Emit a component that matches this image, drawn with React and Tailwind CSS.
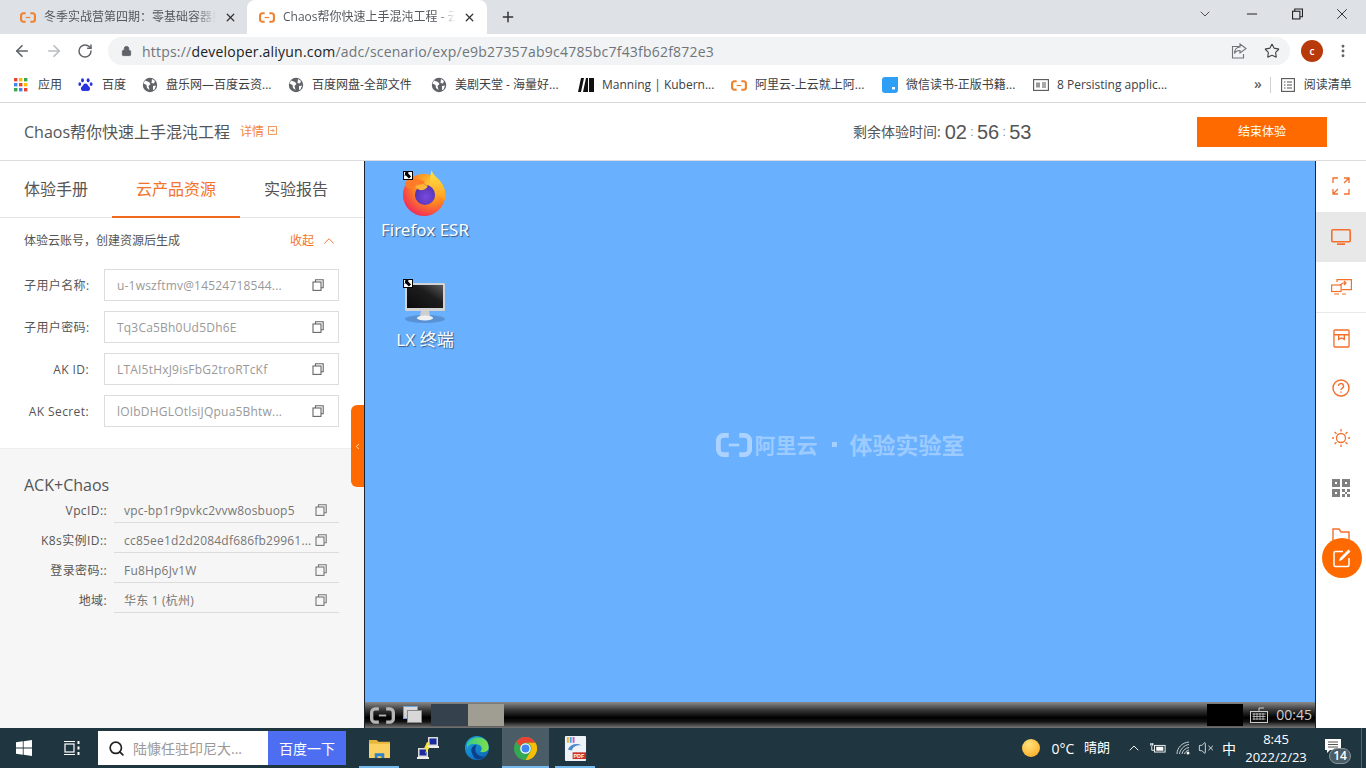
import { ArrowLeft, ArrowRight, RotateCw, Lock, Star, ChevronDown, ChevronUp, ChevronLeft, Minus, X, Plus, MoreVertical, Search, VolumeX } from 'lucide-react';

const SANS = "font-['Open_Sans','Noto_Sans_CJK_SC',sans-serif]";

const AliLogo = ({ className = 'w-[16px] h-[11px]', color = '#f0812d' }) => (
  <svg viewBox="0 0 24 16" className={className} fill="none">
    <path d="M8.5 1.6H5A3.4 3.4 0 0 0 1.6 5v6A3.4 3.4 0 0 0 5 14.4h3.5M15.5 1.6H19A3.4 3.4 0 0 1 22.4 5v6a3.4 3.4 0 0 1-3.4 3.4h-3.5" stroke={color} strokeWidth="3.2" />
    <path d="M8.5 8h7" stroke={color} strokeWidth="1.8" />
  </svg>
);

const CopyIcon = ({ color = '#666' }) => (
  <svg viewBox="0 0 12 12" className="w-[12px] h-[12px]" fill="none" stroke={color} strokeWidth="1.1">
    <rect x="1" y="3" width="8" height="8.4" />
    <path d="M3.5 3V.8h7.7v8H9" />
  </svg>
);

const Globe = () => (
  <svg viewBox="0 0 16 16" className="w-[16px] h-[16px]">
    <circle cx="8" cy="8" r="7.2" fill="#5f6368" />
    <path d="M3 3.5 7 5l1.5 2-2 2 1 4L5 11 4.5 8 1.5 6.5zM10 2l3 2-1 2.5-2.5-.5zM11 9l3-.5-1.5 4-1.5.5z" fill="#fff" />
  </svg>
);

const AppsGrid = () => (
  <svg viewBox="0 0 14 14" className="w-[14px] h-[14px]">
    {[0, 5, 10].map(y => [0, 5, 10].map(x => (
      <rect key={`${x}-${y}`} x={x} y={y} width="3.4" height="3.4" fill={y === 0 ? (x === 0 ? '#ea4335' : x === 5 ? '#fbbc04' : '#34a853') : y === 5 ? (x === 0 ? '#4285f4' : x === 5 ? '#ea4335' : '#fbbc04') : (x === 0 ? '#34a853' : x === 5 ? '#4285f4' : '#ea4335')} />
    )))}
  </svg>
);

const Paw = () => (
  <svg viewBox="0 0 16 16" className="w-[15px] h-[16px]" fill="#2932e1">
    <ellipse cx="4.8" cy="3" rx="1.6" ry="2.3" />
    <ellipse cx="10.8" cy="3" rx="1.6" ry="2.3" />
    <ellipse cx="1.9" cy="7" rx="1.5" ry="2" />
    <ellipse cx="14" cy="7" rx="1.5" ry="2" />
    <path d="M8 6.5c-2 0-2.4 2-4 3.4-1.7 1.6-.8 4.6 1.7 4.6 1 0 1.5-.4 2.3-.4s1.3.4 2.3.4c2.5 0 3.4-3 1.7-4.6C10.4 8.5 10 6.5 8 6.5z" />
  </svg>
);

const Manning = () => (
  <svg viewBox="0 0 16 14" className="w-[16px] h-[14px]" fill="#111">
    <path d="M0 14 3 0h3L3 14zM5 14 8 0h2v14zM11 0h5v14h-5z" />
  </svg>
);

const WeRead = () => (
  <svg viewBox="0 0 16 16" className="w-[16px] h-[16px]">
    <path d="M3 0h13v13a3 3 0 0 1-3 3H3a3 3 0 0 1-3-3V3a3 3 0 0 1 3-3z" fill="#2e9ff5" />
    <rect x="10" y="10" width="3" height="2.4" fill="#fff" />
  </svg>
);

const DocIcon = () => (
  <svg viewBox="0 0 16 12" className="w-[16px] h-[12px]" fill="none" stroke="#555" strokeWidth="1.1">
    <rect x=".6" y=".6" width="14.8" height="10.8" />
    <rect x="3" y="3.5" width="4" height="5" fill="#999" stroke="none" />
    <path d="M9 4h4M9 6h4M9 8h4" />
  </svg>
);

const BOOKMARKS = [
  { icon: <AppsGrid />, text: '应用', w: 'w-[64px]' },
  { icon: <Paw />, text: '百度', w: 'w-[64px]' },
  { icon: <Globe />, text: '盘乐网—百度云资...', w: 'w-[146px]' },
  { icon: <Globe />, text: '百度网盘-全部文件', w: 'w-[143px]' },
  { icon: <Globe />, text: '美剧天堂 - 海量好...', w: 'w-[147px]' },
  { icon: <Manning />, text: 'Manning | Kubern...', w: 'w-[153px]' },
  { icon: <AliLogo />, text: '阿里云-上云就上阿...', w: 'w-[151px]' },
  { icon: <WeRead />, text: '微信读书-正版书籍...', w: 'w-[151px]' },
  { icon: <DocIcon />, text: '8 Persisting applic...', w: 'w-[151px]' },
];

const Field = ({ label, value }) => (
  <div className="flex items-center h-[32px]">
    <span className="w-[65px] pt-[1px] text-right text-[12px] tracking-[0.4px] text-[#555] whitespace-nowrap">{label}</span>
    <div className="ml-[15px] w-[235px] h-[32px] border border-[#dcdcdc] flex items-center justify-between pl-[12px] pr-[14px] bg-white">
      <span className="pt-[1px] text-[12px] text-[#999] tracking-[0.2px] whitespace-nowrap">{value}</span>
      <CopyIcon />
    </div>
  </div>
);

const InfoRow = ({ label, value }) => (
  <div className="flex items-start h-[30px]">
    <span className="w-[107px] pt-[9px] leading-[18px] text-right text-[12px] tracking-[0.4px] text-[#555] whitespace-nowrap">{label}</span>
    <div className="ml-[7px] w-[225px] h-[30px] border-b border-[#dcdcdc] flex items-start justify-between pt-[9px] pl-[10px] pr-[12px]">
      <span className="text-[12px] leading-[18px] text-[#777] tracking-[0.2px] whitespace-nowrap">{value}</span>
      <span className="pt-[2px]"><CopyIcon color="#777" /></span>
    </div>
  </div>
);

const Firefox = () => (
  <svg viewBox="0 0 48 48" className="w-[46px] h-[48px]">
    <defs>
      <radialGradient id="ffBody" cx="0.7" cy="0.25" r="0.95">
        <stop offset="0" stopColor="#ffcf3c" />
        <stop offset="0.45" stopColor="#ff8a1f" />
        <stop offset="0.8" stopColor="#f5394f" />
        <stop offset="1" stopColor="#d81f78" />
      </radialGradient>
      <linearGradient id="ffTop" x1="0" y1="0" x2="0" y2="1">
        <stop offset="0" stopColor="#ffe847" />
        <stop offset="1" stopColor="#ff9a1f" />
      </linearGradient>
      <radialGradient id="ffCore" cx="0.55" cy="0.6" r="0.7">
        <stop offset="0" stopColor="#7a49e0" />
        <stop offset="1" stopColor="#4a2fa8" />
      </radialGradient>
    </defs>
    <circle cx="23" cy="26" r="22" fill="url(#ffBody)" />
    <path d="M31 0c1 5 5 7 9 12 5 6 6 13 5 20L32 22c-3-5-4-12-1-22z" fill="url(#ffTop)" />
    <circle cx="24" cy="26" r="10.5" fill="url(#ffCore)" />
    <path d="M3 14c3-5 6-7 10-8-1 2-1 3 0 4 3-1 7 0 10 2 3 2-5 4-8 3-1 3-5 4-9 4-2-1-3-3-3-5z" fill="#ff7b27" />
    <path d="M14 17c4-2 8-2 12-1 2 1-1 5-6 5-3 0-5-2-6-4z" fill="#ffb43a" />
  </svg>
);

const Monitor = () => (
  <svg viewBox="0 0 44 44" className="w-[44px] h-[44px]">
    <defs>
      <linearGradient id="scr" x1="0" y1="1" x2="1" y2="0">
        <stop offset="0" stopColor="#0b0b0b" />
        <stop offset="0.6" stopColor="#1d1d1d" />
        <stop offset="1" stopColor="#5a5a5a" />
      </linearGradient>
    </defs>
    <ellipse cx="22" cy="38" rx="20" ry="4" fill="#4d7eb8" opacity="0.6" />
    <rect x="2" y="2" width="40" height="28" rx="1" fill="#d3d3d3" />
    <rect x="4" y="4" width="36" height="23" fill="url(#scr)" />
    <path d="M18 30h8l1 5h-10z" fill="#cfcfcf" />
    <ellipse cx="22" cy="37" rx="8" ry="2.5" fill="#f1f1f1" />
  </svg>
);

const ShortcutBadge = () => (
  <div className="w-[10px] h-[9px] bg-white border border-black flex items-center justify-center">
    <svg viewBox="0 0 8 8" className="w-[8px] h-[7px]"><path d="M1 0h4L3.8 1.2 7.5 5 5 7.5 1.3 3.7 0 5z" fill="#000" /></svg>
  </div>
);

const ORG = '#f26f2c';

const Rail = () => (
  <div className="relative w-[50px] bg-white flex flex-col">
    <div className="h-[51px] flex items-center justify-center">
      <svg viewBox="0 0 18 18" className="w-[18px] h-[18px] -translate-y-[1px]" fill="none" stroke={ORG} strokeWidth="1.3">
        <path d="M1 6V1h5M12 1h5v5M17 12v5h-5M6 17H1v-5M12 6l5-5M1 17l5-5" />
      </svg>
    </div>
    <div className="h-[50px] bg-[#e8e8e8] flex items-center justify-center">
      <svg viewBox="0 0 20 16" className="w-[20px] h-[16px]" fill="none" stroke={ORG} strokeWidth="1.6">
        <rect x=".8" y=".8" width="18.4" height="12" rx="1" />
        <path d="M6 15.2h8" strokeWidth="1.8" />
      </svg>
    </div>
    <div className="h-[51px] border-b border-[#e8e8e8] flex items-center justify-center">
      <svg viewBox="0 0 21 16" className="w-[21px] h-[16px]" fill="none" stroke={ORG} strokeWidth="1.2">
        <path d="M6 3V.6h14.4v10H11M15 15h-4" />
        <rect x=".6" y="6" width="9.5" height="6.5" />
        <path d="M3 15h5M9 6l3-2h3M13 2l2 2-2 2" />
      </svg>
    </div>
    <div className="h-[50px] flex items-center justify-center">
      <svg viewBox="0 0 18 20" className="w-[17px] h-[19px]" fill="none" stroke={ORG} strokeWidth="1.4">
        <path d="M2 1h14a1 1 0 0 1 1 1v16a1 1 0 0 1-1 1H2a1 1 0 0 1-1-1V2a1 1 0 0 1 1-1zM1 6h16M6 6v5l3-1.5 3 1.5V6" />
      </svg>
    </div>
    <div className="h-[50px] flex items-center justify-center">
      <svg viewBox="0 0 18 18" className="w-[18px] h-[18px]" fill="none" stroke={ORG} strokeWidth="1.4">
        <circle cx="9" cy="9" r="8" />
        <path d="M6.5 7a2.5 2.5 0 1 1 3.6 2.3c-.8.4-1.100.9-1.100 1.700M9 12.600v1.200" />
      </svg>
    </div>
    <div className="h-[50px] flex items-center justify-center">
      <svg viewBox="0 0 18 18" className="w-[18px] h-[18px]" fill="none" stroke={ORG} strokeWidth="1.3">
        <circle cx="9" cy="9" r="4.5" />
        <path d="M9 0v2.5M9 15.5V18M0 9h2M16 9h2M2.5 3l2 1.700M15.500 3l-2 1.700M2.500 15l2-1.700M15.500 15l-2-1.700" />
      </svg>
    </div>
    <div className="h-[50px] flex items-center justify-center">
      <svg viewBox="0 0 18 18" className="w-[18px] h-[18px]">
        <path fillRule="evenodd" d="M0 0h8v8H0zM3 3v2h2V3zM10 0h8v8h-8zM13 3v2h2V3zM0 10h8v8H0zM3 13v2h2v-2zM10 10h3v3h-3zM15 10h3v3h-3zM13 13h2v2h-2zM10 15h3v3h-3zM15 15h3v3h-3z" fill="#808080" />
      </svg>
    </div>
    <div className="h-[50px] flex items-center justify-center">
      <svg viewBox="0 0 18 18" className="w-[18px] h-[18px] -translate-y-[2px]" fill="none" stroke={ORG} strokeWidth="1.4">
        <path d="M1 17V2h6l2 3h8v12z" />
      </svg>
    </div>
    {/* floating note button */}
    <div className="absolute left-[6px] top-[377px] w-[40px] h-[40px] rounded-full bg-[#ff6a00] flex items-center justify-center">
      <svg viewBox="0 0 20 20" className="w-[20px] h-[20px]" fill="none" stroke="#fff" strokeWidth="1.5">
        <path d="M17 10v7a1.5 1.5 0 0 1-1.5 1.5h-12A1.5 1.5 0 0 1 2 17V5a1.5 1.5 0 0 1 1.5-1.5H11" />
        <path d="M16.5 1.5l2 2L10 12l-3 1 1-3z" fill="#fff" stroke="none" />
      </svg>
    </div>
  </div>
);

const WinLogo = () => (
  <svg viewBox="0 0 16 16" className="w-[16px] h-[16px]" fill="#fff">
    <path d="M0 2.3 6.8 1.3v6.3H0zM7.6 1.2 16 0v7.6H7.6zM0 8.4h6.8v6.3L0 13.7zM7.6 8.4H16V16l-8.4-1.2z" />
  </svg>
);

const TaskView = () => (
  <svg viewBox="0 0 16 16" className="w-[16px] h-[16px]" fill="none" stroke="#fff" strokeWidth="1.2">
    <path d="M0 1.5h11M0 14.5h11" />
    <rect x="1" y="4" width="9" height="8" />
    <path d="M14.5 1v3M14.5 6.5v3M14.5 12v3" strokeWidth="2" />
  </svg>
);

const Explorer = () => (
  <svg viewBox="0 0 24 22" className="w-[23px] h-[21px]">
    <path d="M1 2h8l2 2h12v6H1z" fill="#e8b53c" />
    <rect x="1" y="6" width="22" height="15" fill="#fbd261" />
    <path d="M7 21v-5h10v5h-3v-2h-4v2z" fill="#2e83c9" />
  </svg>
);

const NetIcon = () => (
  <svg viewBox="0 0 24 24" className="w-[24px] h-[24px]">
    <rect x="12" y="1" width="10" height="9" fill="#dcdcdc" />
    <rect x="13.5" y="2.5" width="7" height="6" fill="#1b2a9c" />
    <rect x="2" y="12" width="10" height="9" fill="#dcdcdc" />
    <rect x="3.5" y="13.5" width="7" height="6" fill="#1b2a9c" />
    <rect x="1" y="21" width="12" height="2" fill="#eee" />
    <rect x="11" y="10" width="12" height="2" fill="#eee" />
    <path d="M11 6l3 1-3 4 3 0-5 7 1.5-5.5H8z" fill="#f6e53a" />
  </svg>
);

const Edge = () => (
  <svg viewBox="0 0 24 24" className="w-[24px] h-[24px]">
    <defs>
      <linearGradient id="edg" x1="0" y1="0" x2="1" y2="1">
        <stop offset="0" stopColor="#1aa7e0" />
        <stop offset="1" stopColor="#0b5fb5" />
      </linearGradient>
      <linearGradient id="edg2" x1="0" y1="0" x2="1" y2="0">
        <stop offset="0" stopColor="#37c98a" />
        <stop offset="1" stopColor="#7fe04a" />
      </linearGradient>
    </defs>
    <circle cx="12" cy="12" r="12" fill="url(#edg)" />
    <path d="M2 8c3-6 11-8 17-5 4 2 5 7 4.5 10-.5 3-6 4-8.5 2.500 3-2 2-6-2-7C8 7.500 3 8 2 13z" fill="url(#edg2)" />
    <path d="M7 17c-2-3 0-8 5-8-3 3-2 9 3 11 2 1 4 .5 5-.5-2 3-6 4.500-9 3.500-2-1-3-3-4-6z" fill="#0c3f8f" />
  </svg>
);

const Chrome = () => (
  <svg viewBox="0 0 24 24" className="w-[23px] h-[23px]">
    <circle cx="12" cy="12" r="12" fill="#34a853" />
    <path d="M12 0a12 12 0 0 1 10.4 6H12a6 6 0 0 0-5.6 3.8L2.3 5A12 12 0 0 1 12 0z" fill="#ea4335" />
    <path d="M22.4 6A12 12 0 0 1 12 24l5.200-9A6 6 0 0 0 17.200 8.500 6 6 0 0 0 12 6z" fill="#fbbc04" />
    <circle cx="12" cy="12" r="5.5" fill="#fff" />
    <circle cx="12" cy="12" r="4.2" fill="#4285f4" />
  </svg>
);

const PdfApp = () => (
  <svg viewBox="0 0 24 26" className="w-[23px] h-[25px]">
    <rect x="1" y="0" width="22" height="26" rx="1" fill="#eef3f8" />
    <rect x="3" y="1" width="2" height="6" fill="#e8b53c" />
    <rect x="6" y="1" width="2" height="6" fill="#47a5dc" />
    <rect x="9" y="1" width="2" height="6" fill="#c45cc5" />
    <path d="M4 14c3-6 10-7 15-4-5-1-9 0-11 5z" fill="#4d88c9" />
    <rect x="9" y="17" width="14" height="7" fill="#c8302a" />
    <text x="10" y="23" fontSize="5.5" fontWeight="700" fill="#fff" fontFamily="Liberation Sans, sans-serif">PDF</text>
  </svg>
);

const Taskbar = () => (
  <div className={`h-[40px] bg-[#1f3540] flex items-center text-white ${SANS}`}>
    <div className="w-[48px] h-full flex items-center justify-center"><WinLogo /></div>
    <div className="w-[48px] h-full flex items-center justify-center"><TaskView /></div>
    <div className="ml-[2px] w-[170px] h-[34px] bg-white flex items-center pl-[10px]">
      <Search className="w-[17px] h-[17px] text-[#222]" strokeWidth={2.4} />
      <span className="ml-[8px] text-[14px] text-[#999] whitespace-nowrap">陆慷任驻印尼大...</span>
    </div>
    <div className="w-[78px] h-[34px] bg-[#4e6ef2] flex items-center justify-center text-[14px]">百度一下</div>
    <div className="ml-[9px] flex h-full">
      <div className="relative w-[48px] h-full flex items-center justify-center"><Explorer /><div className="absolute bottom-0 left-[4px] right-[4px] h-[2px] bg-[#76b9ed]" /></div>
      <div className="ml-[1px] w-[48px] h-full flex items-center justify-center"><NetIcon /></div>
      <div className="ml-[1px] w-[48px] h-full flex items-center justify-center"><Edge /></div>
      <div className="relative ml-[1px] w-[47px] h-full bg-[#4a5c66] flex items-center justify-center"><Chrome /><div className="absolute bottom-0 left-0 right-0 h-[2px] bg-[#76b9ed]" /></div>
      <div className="relative ml-[2px] w-[48px] h-full flex items-center justify-center"><PdfApp /><div className="absolute bottom-0 left-[4px] right-[4px] h-[2px] bg-[#76b9ed]" /></div>
    </div>
    <div className="ml-auto flex items-center h-full text-[13px]">
      <div className="w-[18px] h-[18px] rounded-full bg-[radial-gradient(circle_at_40%_30%,#ffe27a,#f9a51a)] mr-[6px]" />
      <div className="w-[34px] text-center text-[14px] whitespace-nowrap">0°C</div>
      <div className="w-[34px] text-center text-[13px] whitespace-nowrap">晴朗</div>
      <div className="w-[8px]" />
      <div className="w-[24px] flex justify-center"><ChevronUp className="w-[16px] h-[16px]" strokeWidth={1.4} /></div>
      <div className="w-[24px] flex justify-center">
        <svg viewBox="0 0 18 12" className="w-[16px] h-[11px]" fill="none" stroke="#fff" strokeWidth="1">
          <rect x="5" y="2.5" width="12" height="7.5" />
          <rect x="7" y="4" width="8" height="4.5" fill="#fff" stroke="none" />
          <path d="M0 1h4M1 0v3M3 0v3M2 3v5h3" />
        </svg>
      </div>
      <div className="w-[25px] flex justify-center">
        <svg viewBox="0 0 14 14" className="w-[14px] h-[14px]" fill="none" stroke="#c9d0d4" strokeWidth="1">
          <path d="M1 13C1 7 6 1.5 13 1M3.5 13C4 8.5 8 4 13 3.5M6 13c.5-3 3-6 7-6.500M8.500 13c.3-1.500 2-3.500 4.500-4" />
          <circle cx="12" cy="12" r="1.5" fill="#fff" stroke="none" />
        </svg>
      </div>
      <div className="w-[22px] flex justify-center"><VolumeX className="w-[16px] h-[16px]" strokeWidth={1.2} /></div>
      <div className="w-[24px] text-center text-[14px]">中</div>
      <div className="w-[70px] flex flex-col items-center text-[13px] leading-[18px]">
        <span>8:45</span>
        <span>2022/2/23</span>
      </div>
      <div className="relative w-[44px] h-full flex items-center justify-center">
        <svg viewBox="0 0 16 14" className="w-[16px] h-[14px] -translate-y-[2px]">
          <path d="M0 0h16v11H5l-3 3v-3H0z" fill="#fff" />
          <path d="M3 3h10M3 5.5h10M3 8h10" stroke="#555" strokeWidth="1" />
        </svg>
        <div className="absolute left-[18px] top-[20px] w-[22px] h-[16px] rounded-full bg-[#4a5c66] border border-[#8a959b] flex items-center justify-center text-[12px] font-semibold leading-none">14</div>
      </div>
      <div className="w-[6px]" />
      <div className="w-[5px] h-full border-l border-[#53666f]" />
    </div>
  </div>
);

export default function App() {
  return (
    <div className={`w-[1366px] h-[768px] overflow-hidden flex flex-col bg-white ${SANS}`}>
      {/* tab strip */}
      <div className="h-[34px] bg-[#dee1e6] flex items-end pl-[8px] relative text-[#45494d]">
        <div className="w-[239px] h-[34px] flex items-center pl-[12px]">
          <AliLogo />
          <span className="ml-[8px] w-[172px] overflow-hidden whitespace-nowrap text-[12px] text-[#55595e] [mask-image:linear-gradient(to_right,#000_88%,transparent)]">冬季实战营第四期：零基础容器技术实战</span>
          <X className="ml-[8px] w-[13px] h-[13px] text-[#333]" strokeWidth={2.4} />
        </div>
        <div className="w-[240px] h-[34px] bg-white rounded-t-[8px] flex items-center pl-[12px]">
          <AliLogo />
          <span className="ml-[8px] w-[172px] overflow-hidden whitespace-nowrap text-[12px] text-[#55595e] [mask-image:linear-gradient(to_right,#000_90%,transparent)]">Chaos帮你快速上手混沌工程 - 云起实验室</span>
          <X className="ml-[8px] w-[13px] h-[13px] text-[#333]" strokeWidth={2.4} />
        </div>
        <div className="ml-[13px] h-[34px] flex items-center"><Plus className="w-[16px] h-[16px] text-[#333]" strokeWidth={2.2} /></div>
        <div className="ml-auto h-[28px] self-start flex items-center">
          <ChevronDown className="w-[16px] h-[16px] text-[#444]" strokeWidth={1.4} />
          <Minus className="ml-[31px] w-[16px] h-[16px] text-[#222]" strokeWidth={1.5} />
          <svg viewBox="0 0 12 12" className="ml-[32px] w-[11px] h-[12px]" fill="none" stroke="#222" strokeWidth="1.2"><rect x=".6" y="3" width="8" height="8.4" /><path d="M3 3V.6h8.4V9H8.6" /></svg>
          <X className="ml-[30px] mr-[15px] w-[18px] h-[18px] text-[#222]" strokeWidth={1.2} />
        </div>
      </div>
      {/* toolbar */}
      <div className="h-[34px] bg-white flex items-center">
        <div className="w-[108px] flex items-center pl-[13px]">
          <ArrowLeft className="w-[18px] h-[18px] text-[#5f6368]" strokeWidth={2.2} />
          <ArrowRight className="ml-[14px] w-[18px] h-[18px] text-[#b9bcc0]" strokeWidth={2.2} />
          <RotateCw className="ml-[14px] w-[16px] h-[16px] text-[#5f6368]" strokeWidth={2.2} />
        </div>
        <div className="w-[1182px] h-[28px] rounded-full bg-[#f1f3f4] flex items-center pl-[13px] pr-[10px]">
          <Lock className="w-[11px] h-[12px] text-[#5f6368]" fill="#5f6368" strokeWidth={2} />
          <span className="ml-[10px] text-[14px] tracking-[0.21px] text-[#70757a] whitespace-nowrap">https://<span className="text-[#202124]">developer.aliyun.com</span>/adc/scenario/exp/e9b27357ab9c4785bc7f43fb62f872e3</span>
          <div className="ml-auto flex items-center">
            <svg viewBox="0 0 16 16" className="w-[16px] h-[16px]" fill="none" stroke="#70757a" strokeWidth="1.1"><path d="M9 3.5H1.5V15h11v-4M9 1l6 4.5L9 10V7.5c-3 0-4.5 1-5.5 3 0-4 2-6.5 5.500-6.500z" /></svg>
            <Star className="ml-[17px] w-[16px] h-[16px] text-[#444]" strokeWidth={1.7} />
          </div>
        </div>
        <div className="ml-[11px] w-[22px] h-[22px] rounded-full bg-[#b83a0b] flex items-center justify-center text-white text-[10px] font-semibold">c</div>
        <MoreVertical className="ml-[12px] w-[16px] h-[16px] text-[#5f6368]" strokeWidth={2.4} />
      </div>
      {/* bookmarks */}
      <div className="h-[35px] bg-white border-b border-[#d6d6d6] flex items-center pl-[14px] text-[12px] text-[#3c4043]">
        {BOOKMARKS.map(b => (
          <div key={b.text} className={`${b.w} shrink-0 flex items-center`}>
            <span className="w-[16px] flex justify-start">{b.icon}</span>
            <span className="ml-[8px] whitespace-nowrap">{b.text}</span>
          </div>
        ))}
        <span className="ml-[70px] text-[14px] text-[#5f6368] font-semibold -translate-y-[2px]">»</span>
        <div className="ml-[8px] h-[16px] border-l border-[#d0d0d0]" />
        <svg viewBox="0 0 14 14" className="ml-[10px] w-[14px] h-[14px]" fill="none" stroke="#555" strokeWidth="1.1"><rect x=".6" y=".6" width="12.8" height="12.8" /><path d="M3 4h1.5M6 4h5M3 7h1.5M6 7h5M3 10h1.5M6 10h5" /></svg>
        <span className="ml-[9px] whitespace-nowrap">阅读清单</span>
      </div>
      {/* page header */}
      <div className="h-[58px] border-b border-[#dcdcdc] flex items-center pl-[24px] shrink-0">
        <span className="text-[16px] text-[#555] whitespace-nowrap">Chaos帮你快速上手混沌工程</span>
        <span className="ml-[10px] text-[12px] text-[#f2843f]">详情</span>
        <svg viewBox="0 0 9 9" className="ml-[4px] w-[9px] h-[9px] -translate-y-[1px]" fill="none" stroke="#f2843f" strokeWidth=".8"><rect x=".5" y=".5" width="8" height="8" /><path d="M2 4.5h4M4.5 3l1.5 1.5L4.5 6" /></svg>
        <span className="ml-[576px] text-[14px] text-[#555] whitespace-nowrap">剩余体验时间:</span>
        <span className="ml-[4px] flex items-center font-['Liberation_Sans',sans-serif] text-[20px] text-[#555] whitespace-nowrap">02<span className="w-[10px] text-center text-[12px] text-[#888]">:</span>56<span className="w-[10px] text-center text-[12px] text-[#888]">:</span>53</span>
        <div className="ml-auto mr-[39px] w-[130px] h-[30px] bg-[#ff6a00] text-white text-[12px] flex items-center justify-center">结束体验</div>
      </div>
      {/* body */}
      <div className="flex flex-1 min-h-0">
        <aside className="relative w-[364px] shrink-0 flex flex-col bg-white">
          <div className="h-[57px] border-b border-[#e2e2e2] flex text-[16px] text-[#555] shrink-0">
            <div className="w-[112px] pl-[24px] flex items-center">体验手册</div>
            <div className="relative w-[128px] flex items-center justify-center text-[#f2742b]">
              云产品资源
              <div className="absolute left-0 right-0 bottom-[-1px] h-[2px] bg-[#ef6a1d]" />
            </div>
            <div className="w-[124px] pl-[24px] flex items-center">实验报告</div>
          </div>
          <div className="h-[231px] shrink-0 px-[24px] pt-[12px] border-b border-[#eeeeee]">
            <div className="h-[21px] flex items-center text-[12px] text-[#555]">
              <span>体验云账号，创建资源后生成</span>
              <span className="ml-auto text-[#f2742b]">收起</span>
              <ChevronUp className="ml-[6px] mr-[2px] w-[18px] h-[18px] text-[#f2742b]" strokeWidth={1.3} />
            </div>
            <div className="mt-[18px] flex flex-col gap-[10px]">
              <Field label="子用户名称:" value="u-1wszftmv@14524718544..." />
              <Field label="子用户密码:" value="Tq3Ca5Bh0Ud5Dh6E" />
              <Field label="AK ID:" value="LTAI5tHxJ9isFbG2troRTcKf" />
              <Field label="AK Secret:" value="lOIbDHGLOtlsiJQpua5Bhtw..." />
            </div>
          </div>
          <div className="flex-1 bg-[#f6f6f6] pt-[27px]">
            <div className="pl-[24px] h-[17px] flex items-center text-[16px] text-[#555]">ACK+Chaos</div>
            <div>
              <InfoRow label="VpcID::" value="vpc-bp1r9pvkc2vvw8osbuop5" />
              <InfoRow label="K8s实例ID::" value="cc85ee1d2d2084df686fb29961..." />
              <InfoRow label="登录密码::" value="Fu8Hp6Jv1W" />
              <InfoRow label="地域:" value="华东 1 (杭州)" />
            </div>
          </div>
          {/* collapse handle */}
          <div className="absolute right-0 top-[244px] w-[13px] h-[82px] bg-[#ff6a00] rounded-tl-[6px] rounded-bl-[6px] flex items-center justify-center">
            <ChevronLeft className="w-[9px] h-[9px] text-white" strokeWidth={2} />
          </div>
        </aside>
        <main className="w-[952px] flex flex-col border-l border-r border-[#1a2430] shrink-0">
          <div className="relative flex-1 bg-[#69b0ff] flex items-center justify-center pt-[26px]">
            {/* desktop shortcuts */}
            <div className="absolute left-0 top-0 w-[120px] flex flex-col items-center text-white font-['Noto_Sans','Noto_Sans_CJK_SC',sans-serif] text-[17px] [text-shadow:1px_1px_1px_rgba(0,0,0,0.5)]">
              <div className="relative mt-[8px] h-[48px] w-[66px] flex justify-center">
                <Firefox />
                <div className="absolute left-[11px] top-[2px]"><ShortcutBadge /></div>
              </div>
              <span className="mt-[1px] leading-[24px] whitespace-nowrap">Firefox ESR</span>
              <div className="relative mt-[39px] h-[46px] w-[66px] flex justify-center">
                <Monitor />
                <div className="absolute left-[11px] top-[-2px]"><ShortcutBadge /></div>
              </div>
              <span className="mt-[1px] leading-[24px] whitespace-nowrap">LX 终端</span>
            </div>
            <div className="flex items-center text-white/35 font-semibold whitespace-nowrap font-['Noto_Sans_CJK_SC',sans-serif]">
              <AliLogo className="w-[36px] h-[24px]" color="rgba(255,255,255,0.45)" />
              <span className="ml-[3px] text-[21px]">阿里云</span>
              <span className="ml-[14px] w-[5px] h-[5px] bg-white/40" />
              <span className="ml-[13px] text-[23px]">体验实验室</span>
            </div>
          </div>
          <div className="h-[26px] shrink-0 bg-[linear-gradient(#8a8a8a,#3a3a3a_30%,#000_60%,#111_75%,#777)] flex items-center pl-[5px] text-[#cfcfcf]">
            <AliLogo className="w-[25px] h-[17px]" color="#b5b5b5" />
            <div className="relative ml-[8px] w-[20px] h-[18px]">
              <div className="absolute left-0 top-0 w-[15px] h-[13px] bg-white/80 border border-[#6aa0e0]" />
              <div className="absolute left-[4px] top-[4px] w-[15px] h-[13px] bg-[#d8d8d8] border border-[#888]" />
            </div>
            <div className="ml-[8px] w-[37px] h-[22px] bg-[#36414e]" />
            <div className="w-[36px] h-[22px] bg-[#a09d93]" />
            <div className="ml-auto w-[36px] h-[22px] bg-black" />
            <svg viewBox="0 0 18 16" className="ml-[7px] w-[18px] h-[16px]" fill="none" stroke="#ccc" strokeWidth="1"><path d="M9 4V1h5" /><rect x=".5" y="4.5" width="17" height="11" /><path d="M2.5 7h13M2.5 9.5h13M2.5 12h13M4 6v7M7 6v7M10 6v7M13 6v7" strokeWidth=".8" /></svg>
            <span className="ml-[8px] mr-[3px] text-[14px] leading-none">00:45</span>
          </div>
        </main>
        <Rail />
      </div>
      <Taskbar />
    </div>
  );
}
